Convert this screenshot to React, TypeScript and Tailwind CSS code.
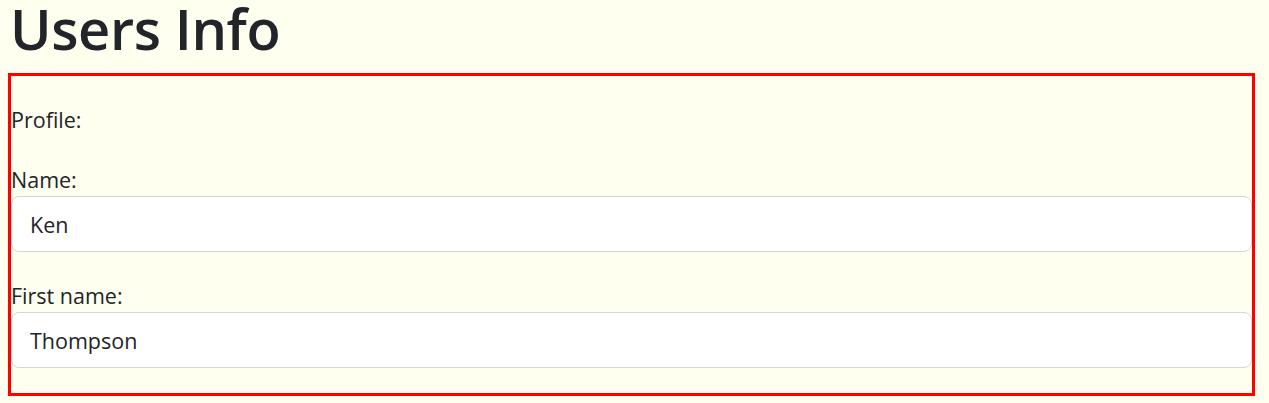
export default function App() {
  return (
    <div className="min-h-[403px] bg-[#fffff0] text-[#212529] font-['Open_Sans',sans-serif]">
      <div className="px-[8px]">
        <h1 className="text-[56px] font-semibold leading-[57px] tracking-[-0.4px] pl-[2px]">Users Info</h1>
        <div className="mt-[16px] w-[1247px] border-[3px] border-[#ff0000] pt-[30px] pb-[25px] text-[21.5px]">
          <p className="leading-[28px]">Profile:</p>
          <label className="mt-[32px] mb-[2px] block leading-[28px]">Name:</label>
          <input
            defaultValue="Ken"
            className="block h-[56px] w-full rounded-[8px] border border-[#d3d6da] bg-white px-[18px] text-[21.5px] outline-none"
          />
          <label className="mt-[30px] mb-[2px] block leading-[28px]">First name:</label>
          <input
            defaultValue="Thompson"
            className="block h-[56px] w-full rounded-[8px] border border-[#d3d6da] bg-white px-[18px] text-[21.5px] outline-none"
          />
        </div>
      </div>
    </div>
  );
}
